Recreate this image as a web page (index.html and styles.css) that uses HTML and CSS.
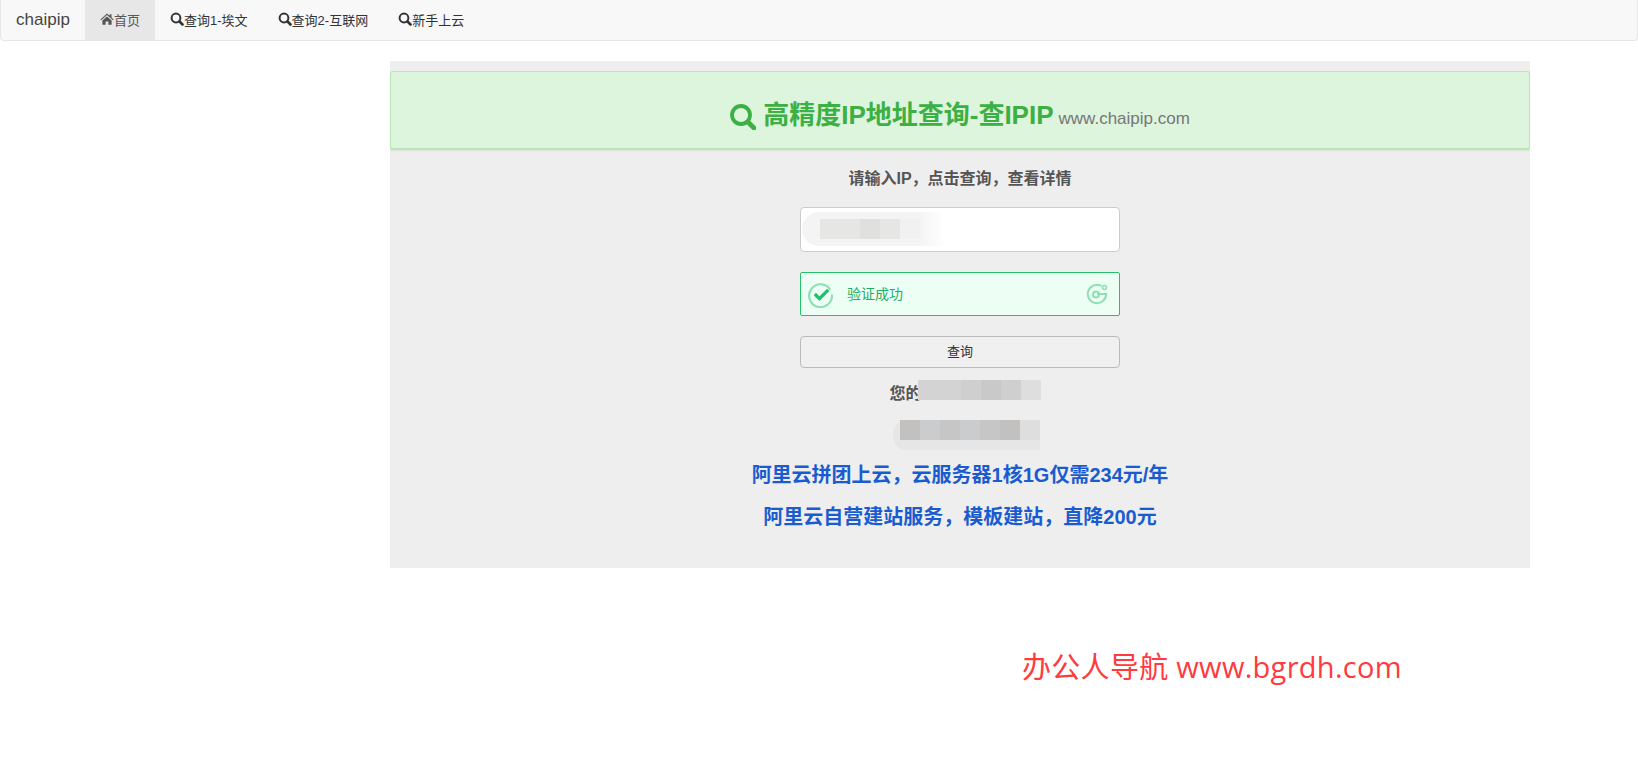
FILE: index.html
```html
<!DOCTYPE html>
<html lang="zh-CN">

<head>
    <meta charset="UTF-8">
    <meta name="viewport" content="width=device-width, initial-scale=1.0">
    <title>高精度IP地址查询-查IPIP</title>
    <link rel="stylesheet" href="styles.css">
</head>

<body>
    <nav class="navbar">
        <a class="brand" href="#">chaipip</a>
        <a class="nav-item active" href="#">
            <svg class="icon" viewBox="0 0 14 14"><path fill="#555" d="M7 1.6 0.4 7.4l0.7 0.8L7 3.1l5.9 5.1 0.7-0.8-2.1-1.8V2.2h-1.8v1.6zM2.4 8.6v4.2h3.2V9.6h2.8v3.2h3.2V8.6L7 4.6z"/></svg>首页
        </a>
        <a class="nav-item" href="#">
            <svg class="icon" viewBox="0 0 14 14"><circle cx="6" cy="6" r="4.4" fill="none" stroke="#333" stroke-width="2"/><path d="M9.5 9.5l3 3" stroke="#333" stroke-width="2.6" stroke-linecap="round"/></svg>查询1-埃文
        </a>
        <a class="nav-item" href="#">
            <svg class="icon" viewBox="0 0 14 14"><circle cx="6" cy="6" r="4.4" fill="none" stroke="#333" stroke-width="2"/><path d="M9.5 9.5l3 3" stroke="#333" stroke-width="2.6" stroke-linecap="round"/></svg>查询2-互联网
        </a>
        <a class="nav-item" href="#">
            <svg class="icon" viewBox="0 0 14 14"><circle cx="6" cy="6" r="4.4" fill="none" stroke="#333" stroke-width="2"/><path d="M9.5 9.5l3 3" stroke="#333" stroke-width="2.6" stroke-linecap="round"/></svg>新手上云
        </a>
    </nav>

    <main class="panel">
        <div class="banner">
            <h2 class="banner-title">
                <svg class="banner-icon" viewBox="0 0 26 26"><circle cx="11" cy="11" r="9" fill="none" stroke="#3cb043" stroke-width="3.8"/><path d="M18 18l6 6" stroke="#3cb043" stroke-width="4.6" stroke-linecap="round"/></svg>
                高精度IP地址查询-查IPIP <small>www.chaipip.com</small>
            </h2>
        </div>

        <p class="tip">请输入IP，点击查询，查看详情</p>

        <form class="query-form">
            <div class="ip-input">
                <div class="smudge">
                    <span class="cell shade-b"></span>
                    <span class="cell shade-b"></span>
                    <span class="cell shade-c"></span>
                    <span class="cell shade-b"></span>
                    <span class="cell shade-a"></span>
                </div>
            </div>

            <div class="captcha">
                <svg class="captcha-check" viewBox="0 0 26 26">
                    <path d="M22.5 8.5A11 11 0 1 0 24 13" fill="none" stroke="#8fdfb4" stroke-width="2"/>
                    <path d="M7.5 12.5l4.5 4.5 8.5-8.5" fill="none" stroke="#1fc36b" stroke-width="3.2"/>
                </svg>
                <span class="captcha-text">验证成功</span>
                <svg class="captcha-logo" viewBox="0 0 22 22">
                    <path d="M15.5 3A9.2 9.2 0 1 0 20.2 11H11" fill="none" stroke="#8fdfb4" stroke-width="2"/>
                    <circle cx="10" cy="11.5" r="3" fill="none" stroke="#8fdfb4" stroke-width="2"/>
                    <circle cx="18.5" cy="4.5" r="2" fill="none" stroke="#8fdfb4" stroke-width="1.6"/>
                </svg>
            </div>

            <button class="query-btn" type="button">查询</button>
        </form>

        <div class="result-row first">
            <span class="result-label">您的</span>
            <div class="blocks">
                <span class="cell light-a"></span>
                <span class="cell light-a"></span>
                <span class="cell light-b"></span>
                <span class="cell light-c"></span>
                <span class="cell light-b"></span>
                <span class="cell light-d"></span>
            </div>
        </div>
        <div class="result-row second">
            <div class="blocks pill">
                <span class="cell dark-a"></span>
                <span class="cell dark-b"></span>
                <span class="cell dark-c"></span>
                <span class="cell dark-b"></span>
                <span class="cell dark-c"></span>
                <span class="cell dark-a"></span>
                <span class="cell light-d"></span>
            </div>
        </div>

        <a class="promo" href="#">阿里云拼团上云，云服务器1核1G仅需234元/年</a>
        <a class="promo" href="#">阿里云自营建站服务，模板建站，直降200元</a>
    </main>

    <div class="watermark">办公人导航 www.bgrdh.com</div>
</body>

</html>
```

FILE: styles.css
```css
body {
    font-family: "Liberation Sans", "Noto Sans CJK SC", sans-serif;
    font-size: 13px;
    color: #333;
    background-color: #fff;
    margin: 0;
}

a {
    text-decoration: none;
}

.navbar {
    display: flex;
    height: 40px;
    background-color: #f8f8f8;
    border: 1px solid #e7e7e7;
    border-top: none;
    border-radius: 0 0 4px 4px;
}

.brand {
    width: 84px;
    padding-left: 15px;
    box-sizing: border-box;
    font-size: 17px;
    line-height: 39px;
    color: #444;
}

.nav-item {
    display: flex;
    align-items: center;
    padding: 0 15px 2px;
    color: #333;
}

.nav-item.active {
    background-color: #e7e7e7;
    color: #555;
}

.icon {
    width: 14px;
    height: 14px;
}

.panel {
    width: 1140px;
    height: 507px;
    margin: 20px 0 0 390px;
    padding-top: 10px;
    box-sizing: border-box;
    background-color: #eee;
}

.banner {
    height: 79px;
    box-sizing: border-box;
    background-color: #ddf4dd;
    border: 1px solid #b8e8b2;
    border-bottom-width: 2px;
    border-radius: 3px;
    box-shadow: 0 1px 2px rgba(0, 0, 0, 0.06);
    padding-top: 27px;
}

.banner-title {
    display: flex;
    justify-content: center;
    align-items: baseline;
    margin: 0;
    font-size: 26px;
    line-height: 32px;
    font-weight: bold;
    color: #3cb043;
}

.banner-icon {
    width: 26px;
    height: 26px;
    margin-right: 7px;
    align-self: center;
}

.banner-title small {
    font-size: 17px;
    font-weight: normal;
    color: #777;
    margin-left: 5px;
}

.tip {
    margin: 18px 0 17px;
    font-size: 16px;
    line-height: 22px;
    font-weight: bold;
    color: #555;
    text-align: center;
}

.query-form {
    display: flex;
    flex-direction: column;
    gap: 20px;
    width: 320px;
    margin: 0 auto;
}

.ip-input {
    height: 45px;
    box-sizing: border-box;
    background-color: #fff;
    border: 1px solid #ccc;
    border-radius: 4px;
    padding: 4px 1px;
}

.smudge {
    display: flex;
    align-items: center;
    width: 143px;
    height: 34px;
    padding-left: 18px;
    box-sizing: border-box;
    background: linear-gradient(to right, #f4f4f4 82%, #fff);
    border-radius: 17px 0 0 17px;
}

.cell {
    width: 20px;
    height: 20px;
}

.shade-a { background-color: #f1f1f1; }
.shade-b { background-color: #e6e6e5; }
.shade-c { background-color: #e0e0de; }

.captcha {
    display: flex;
    align-items: center;
    height: 44px;
    box-sizing: border-box;
    padding: 0 11px 0 6px;
    background-color: #edfff5;
    border: 1px solid #22c36b;
    border-radius: 2px;
}

.captcha-check {
    width: 27px;
    height: 27px;
}

.captcha-text {
    margin-left: 13px;
    padding-bottom: 2px;
    flex: 1;
    font-size: 14px;
    color: #1fae63;
}

.captcha-logo {
    width: 22px;
    height: 22px;
}

.query-btn {
    height: 32px;
    padding: 0 0 3px;
    font-family: inherit;
    font-size: 13px;
    color: #333;
    background-color: #f0f0f0;
    border: 1px solid #bbb;
    border-radius: 4px;
}

.result-row {
    display: flex;
    justify-content: center;
    padding-left: 10px;
}

.result-row.first {
    margin-top: 12px;
    height: 28px;
}

.result-row.second {
    margin-top: 12px;
    height: 34px;
    padding-left: 12px;
}

.result-label {
    font-size: 16px;
    line-height: 27px;
    font-weight: bold;
    color: #555;
    white-space: nowrap;
}

.blocks {
    display: flex;
    align-items: flex-start;
    height: 20px;
    margin-left: -4px;
    padding-left: 3px;
    background-color: #d3d3d3;
}

.blocks.pill {
    height: 30px;
    padding-left: 7px;
    margin-left: 0;
    background-color: #e6e6e6;
    border-radius: 14px 0 0 14px;
}

.light-a { background-color: #d3d3d3; }
.light-b { background-color: #cfcfcf; }
.light-c { background-color: #c9c9c9; }
.light-d { background-color: #dedede; }
.dark-a { background-color: #c2c1bf; }
.dark-b { background-color: #cbcccd; }
.dark-c { background-color: #c5c6c5; }

.promo {
    display: block;
    font-size: 20px;
    line-height: 42px;
    font-weight: bold;
    color: #1a5cd0;
    text-align: center;
}

.watermark {
    position: absolute;
    left: 1022px;
    top: 647px;
    font-family: "Open Sans", "Noto Sans CJK SC", sans-serif;
    font-size: 29px;
    letter-spacing: 0.3px;
    line-height: 40px;
    color: #ff3b40;
}
```
